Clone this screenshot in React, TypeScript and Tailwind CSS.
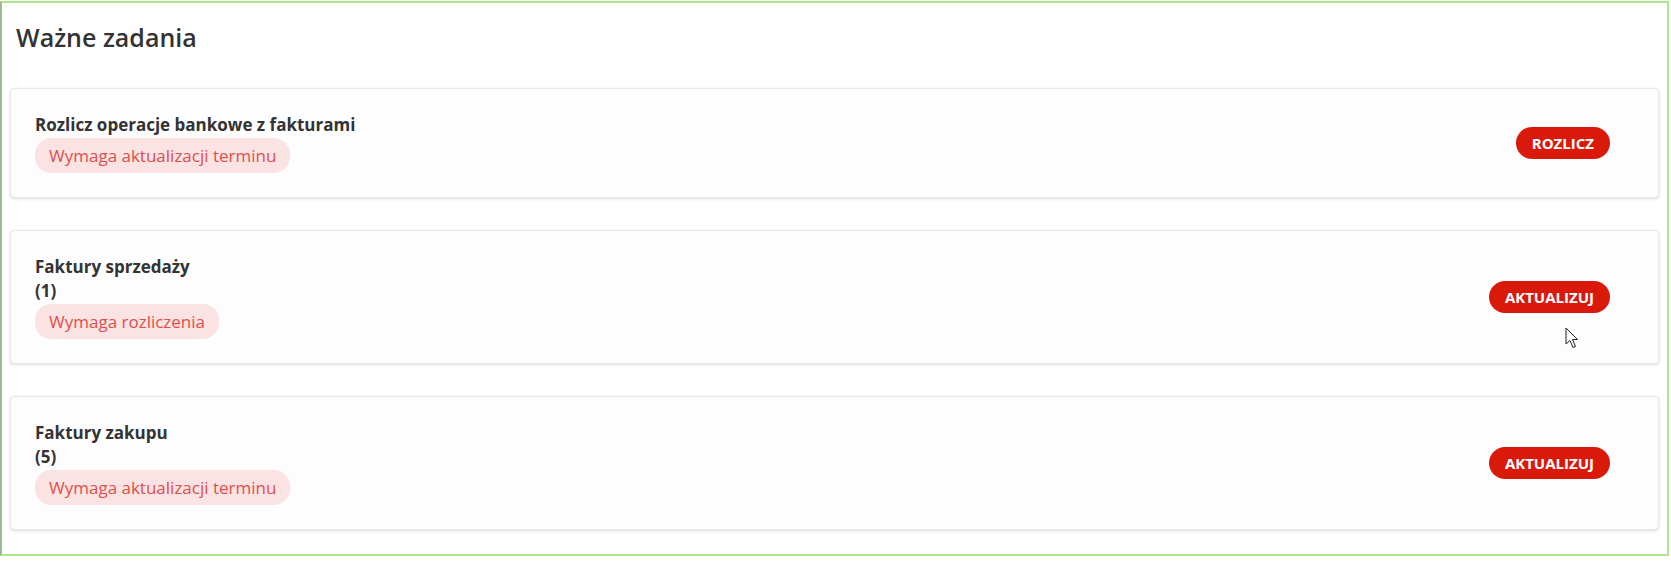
import React from 'react';

type Task = {
  title: string;
  count?: string;
  status: string;
  action: string;
};

const tasks: Task[] = [
  { title: 'Rozlicz operacje bankowe z fakturami', status: 'Wymaga aktualizacji terminu', action: 'Rozlicz' },
  { title: 'Faktury sprzedaży', count: '(1)', status: 'Wymaga rozliczenia', action: 'Aktualizuj' },
  { title: 'Faktury zakupu', count: '(5)', status: 'Wymaga aktualizacji terminu', action: 'Aktualizuj' },
];

const Cursor = () => (
  <svg className="absolute left-[1565px] top-[326px]" width="16" height="24" viewBox="0 0 16 24">
    <path
      d="M1 1 L1 17 L5 13.5 L8 20.5 L10.5 19.5 L7.5 12.5 L12.5 12.5 Z"
      fill="#fff"
      stroke="#222"
      strokeWidth="1"
      strokeLinejoin="round"
    />
  </svg>
);

const TaskCard = ({ task }: { task: Task }) => {
  return (
    <div className="flex items-center justify-between rounded-[4px] border border-[#e8e8e8] bg-[#fdfdfd] pl-6 pr-12 pt-[24px] pb-[24px] shadow-[0_1px_3px_rgba(0,0,0,0.14)]">
      <div className="flex flex-col items-start">
        <div className="text-[17px] leading-[24px] font-bold text-[#333]">{task.title}</div>
        {task.count && <div className="text-[17px] leading-[24px] font-bold text-[#333]">{task.count}</div>}
        <span className="mt-[1px] rounded-[16px] bg-[#fbe3e3] px-[14px] py-[6px] text-[17px] leading-[23px] text-[#df4f4b]">
          {task.status}
        </span>
      </div>
      <button className="rounded-full bg-[#d91a0b] px-4 py-[6px] text-[15px] leading-[20px] font-bold uppercase text-white">
        {task.action}
      </button>
    </div>
  );
};

export default function App() {
  return (
    <div className="relative h-[561px] w-[1671px] bg-white font-['Open_Sans',sans-serif]">
      <div className="mt-px h-[555px] w-[1669px] border-y-2 border-r-2 border-l-2 border-[#aee58f] border-l-[#9db98e] border-l-dotted px-2">
        <h2 className="pl-[6px] pt-[17px] text-[25px] leading-[34px] font-semibold text-[#333]">Ważne zadania</h2>
        <div className="mt-[34px] flex flex-col gap-[32px]">
          {tasks.map((t) => (
            <TaskCard key={t.title + t.status} task={t} />
          ))}
        </div>
      </div>
      <Cursor />
    </div>
  );
}
